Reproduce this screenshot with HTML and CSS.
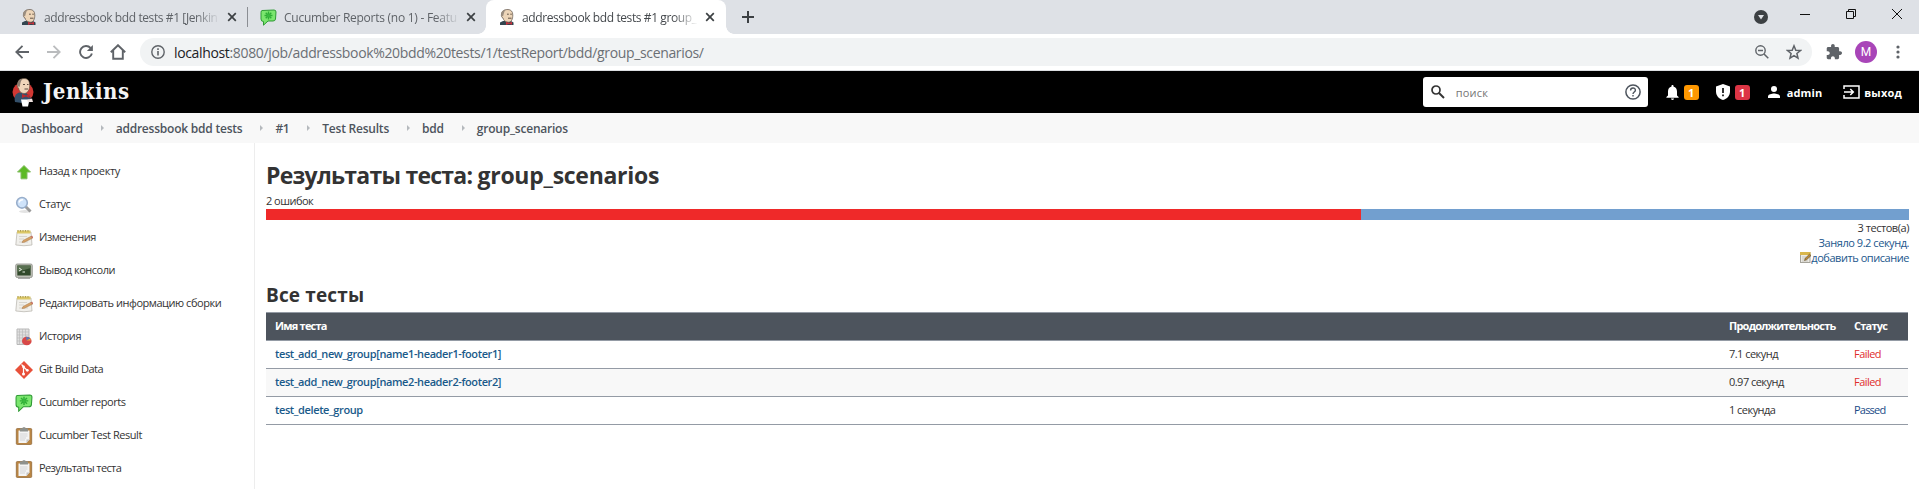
FILE: index.html
```html
<!DOCTYPE html>
<html lang="ru">
<head>
<meta charset="utf-8">
<title>Результаты теста</title>
<link rel="stylesheet" href="styles.css">
</head>
<body>
<svg class="defs" width="0" height="0">
<defs>
<symbol id="butler" viewBox="0 0 16 16"><path d="M1 16V13.500L4 12H12L14.500 13.500V16Z" fill="#33454f"/><path d="M2.500 5C3 1.500 6 .5 9 .5C12 .6 13.800 2.500 13.800 6C13.800 10 12.500 13.200 9.500 13.200C6 13.200 4.500 11 4 9C2.300 8.500 2.200 6.500 2.500 5Z" fill="#edd5b8" stroke="#5d5248" stroke-width=".7"/><path d="M2.500 6.500C1.500 3 4 .6 7 .5C4.800 2.500 5 4.500 4 7.500Z" fill="#9b8e80"/><path d="M8 5.200h1.800M11.300 5.200h1.500M9 9.200h3.500" stroke="#54453a" stroke-width=".9"/><path d="M7 12.800L10 14L13 12.800V15.800L10 14.800L7 16Z" fill="#c4323c"/></symbol>
<symbol id="cuke" viewBox="0 0 17 17"><path d="M2 1.500L14 1Q16 1 16 3L15.500 10Q15.300 12 13 12H8L3.500 16.200V12.500Q1 12.500 1 10V3.500Q1 1.600 2 1.500Z" fill="#7be66e" stroke="#2f9a35" stroke-width="1"/><path d="M8.500 2.500V10.500M4.500 6.500H12.500M5.700 3.700L11.300 9.300M11.300 3.700L5.700 9.300" stroke="#2fae36" stroke-width="1.400"/><circle cx="8.500" cy="6.500" r="1.600" fill="#3abb3f"/></symbol>
<symbol id="close" viewBox="0 0 10 10"><path d="M1.200 1.200L8.800 8.800M8.800 1.200L1.200 8.800" stroke="#3c4043" stroke-width="1.700"/></symbol>
<symbol id="note" viewBox="0 0 18 18"><path d="M2 3H16L17 16Q9 17.500 .8 16Z" fill="#f1f0ec" stroke="#b5b2aa" stroke-width=".7"/><path d="M2.200 1.500H15.500V4.500H2Z" fill="#dcc869"/><path d="M3 1v1.500M5.500 1v1.500M8 1v1.500M10.500 1v1.500M13 1v1.500" stroke="#8b7c35" stroke-width=".7"/><path d="M4 7.500h8M4 10h5M4 13h9" stroke="#ccc9c2" stroke-width=".7"/><path d="M8 11.500L16.500 7L17.800 9L9.500 13.200L7 13.500Z" fill="#d6a066" stroke="#a5784a" stroke-width=".5"/><path d="M15.800 7.300L17.300 6.800L18 8.800L17 9.300Z" fill="#c56d67"/></symbol>
<symbol id="clip" viewBox="0 0 18 18"><rect x="1.300" y="1.500" width="15.400" height="16" rx="1" fill="#b98543" stroke="#8d6231" stroke-width=".7"/><path d="M3.500 3.500H14.500V12.500L11.500 16H3.500Z" fill="#f4f4f4"/><path d="M14.500 12.500H11.500V16Z" fill="#c4c4c4"/><path d="M5 7h7.500M5 9h7.500M5 11h6M5 13h5" stroke="#c4c6c8" stroke-width=".7"/><path d="M5 1.500H7L8 .3H10L11 1.500H13V4.500H5Z" fill="#8e918d"/></symbol>
</defs>
</svg>
<div class="tabs">
  <div class="tab"><svg class="fav" width="16" height="16"><use href="#butler"/></svg><span class="tt">addressbook bdd tests #1 [Jenkin</span><svg width="10" height="10"><use href="#close"/></svg></div>
  <i class="sep"></i>
  <div class="tab second"><svg class="fav" width="17" height="17"><use href="#cuke"/></svg><span class="tt">Cucumber Reports (no 1) - Featu</span><svg width="10" height="10"><use href="#close"/></svg></div>
  <div class="tab active"><svg class="fav" width="16" height="16"><use href="#butler"/></svg><span class="tt">addressbook bdd tests #1 group_</span><svg width="10" height="10"><use href="#close"/></svg></div>
  <svg class="plus" width="12" height="12" viewBox="0 0 12 12"><path d="M6 0V12M0 6H12" stroke="#3c4043" stroke-width="2"/></svg>
  <div class="win">
    <svg class="chev" width="14" height="14" viewBox="0 0 14 14"><circle cx="7" cy="7" r="7" fill="#3c4043"/><path d="M4 5H10L7 9.500Z" fill="#dee1e6"/></svg>
    <svg width="10" height="10" viewBox="0 0 10 10"><path d="M0 5.500H10" stroke="#111"/></svg>
    <svg width="10" height="10" viewBox="0 0 10 10"><path d="M.5 2.500H7.500V9.500H.5ZM2.500 2.500V.5H9.500V7.500H7.500" fill="none" stroke="#111"/></svg>
    <svg width="10" height="10" viewBox="0 0 10 10"><path d="M0 0L10 10M10 0L0 10" stroke="#111"/></svg>
  </div>
</div>
<div class="toolbar">
  <svg width="14" height="14" viewBox="0 0 14 14"><path d="M14 7H1.500M7.500 .8L1.300 7L7.500 13.200" fill="none" stroke="#5f6368" stroke-width="1.800"/></svg>
  <svg width="14" height="14" viewBox="0 0 14 14"><path d="M0 7H12.500M6.500 .8L12.700 7L6.500 13.200" fill="none" stroke="#babcbe" stroke-width="1.800"/></svg>
  <svg width="14" height="14" viewBox="0 0 14 14"><path d="M11.600 3A6 6 0 1 0 12.900 8.500" fill="none" stroke="#5f6368" stroke-width="1.900"/><path d="M13.900 0V6H7.900Z" fill="#5f6368"/></svg>
  <svg class="home" width="16" height="16" viewBox="0 0 16 16"><path d="M.8 8.200L8 1.200L15.200 8.200M3.200 6.500V14.800H12.800V6.500" fill="none" stroke="#5f6368" stroke-width="1.900"/></svg>
  <div class="omni">
    <svg width="14" height="14" viewBox="0 0 14 14"><circle cx="7" cy="7" r="6.200" fill="none" stroke="#5f6368" stroke-width="1.400"/><path d="M7 6V10.500M7 3.300V4.900" stroke="#5f6368" stroke-width="1.600"/></svg>
    <span class="url"><b>localhost</b>:8080/job/addressbook%20bdd%20tests/1/testReport/bdd/group_scenarios/</span>
    <svg class="zoomout" width="14" height="14" viewBox="0 0 14 14"><circle cx="5.500" cy="5.500" r="4.700" fill="none" stroke="#5f6368" stroke-width="1.400"/><path d="M3 5.500H8M9 9L13.300 13.300" stroke="#5f6368" stroke-width="1.500"/></svg>
    <svg width="16" height="16" viewBox="0 0 16 16"><path d="M8 1.800L9.800 6.200L14.500 6.500L10.900 9.500L12 14.200L8 11.700L4 14.200L5.100 9.500L1.500 6.500L6.200 6.200Z" fill="none" stroke="#5f6368" stroke-width="1.500"/></svg>
  </div>
  <svg class="puzzle" width="16" height="16" viewBox="1 1 22 22"><path d="M20.500 11H19V7c0-1.100-.9-2-2-2h-4V3.500C13 2.120 11.880 1 10.500 1S8 2.120 8 3.500V5H4c-1.100 0-1.990.9-1.990 2v3.800H3.500c1.490 0 2.700 1.210 2.700 2.700s-1.210 2.700-2.700 2.700H2V20c0 1.100.9 2 2 2h3.800v-1.500c0-1.490 1.210-2.700 2.700-2.700s2.700 1.210 2.700 2.700V22H17c1.100 0 2-.9 2-2v-4h1.500c1.380 0 2.500-1.120 2.500-2.500S21.880 11 20.500 11z" fill="#5f6368"/></svg>
  <span class="avatar">M</span>
  <svg class="dots" width="4" height="14" viewBox="0 0 4 14"><g fill="#5f6368"><circle cx="2" cy="2" r="1.600"/><circle cx="2" cy="7" r="1.600"/><circle cx="2" cy="12" r="1.600"/></g></svg>
</div>
<header class="header">
  <svg width="22" height="29" viewBox="0 0 22 29"><ellipse cx="11" cy="14" rx="10.500" ry="9.500" fill="#d23833"/><path d="M3 24C2 19 3 16 7 14.500L14 15L18.500 19V24L10 25Z" fill="#34506a"/><path d="M6 4C7 1 10 .4 13 .6C17 1 18 5 17.600 9C17 13 15 15.500 12 15.500C9 15.500 7 13 6.500 10C5 9.500 5 6 6 4Z" fill="#efd6ba" stroke="#5c4a3c" stroke-width=".6"/><path d="M5.500 8C5 4 7.500 1 11 .8C8 3 9 5 7.500 9Z" fill="#8b7d70"/><path d="M11 6.500h2M15 6.500h1.500M12.500 11h3.500" stroke="#4b3b30" stroke-width=".9"/><path d="M10 16L14 17.500L17.500 16V20L14 18.500L10 20Z" fill="#b92b2e"/><path d="M9 21.500H17.500L16 28.500H10.500Z" fill="#fff"/><path d="M15 22L20 20.500L21 24H16Z" fill="#efe3e0"/></svg>
  <span class="brand">Jenkins</span>
  <div class="search">
    <svg width="14" height="14" viewBox="0 0 14 14"><circle cx="5" cy="5" r="4" fill="none" stroke="#333" stroke-width="1.700"/><path d="M8 8L13 13" stroke="#333" stroke-width="2"/></svg>
    <span class="ph">поиск</span>
    <svg class="help" width="16" height="16" viewBox="0 0 16 16"><circle cx="8" cy="8" r="7.100" fill="none" stroke="#4d545d" stroke-width="1.500"/><path d="M5.600 6.400C5.600 3.200 10.400 3.200 10.400 6.200C10.400 8 8 8 8 10M8 11V12.500" fill="none" stroke="#4d545d" stroke-width="1.400"/></svg>
  </div>
  <svg class="bell" width="13" height="15" viewBox="0 0 13 15"><path d="M6.500 15C7.500 15 8 14.300 8 13.600H5C5 14.300 5.500 15 6.500 15ZM11 10.500V6.500C11 4 9.700 2.300 7.600 1.800V1.200C7.600-.3 5.400-.3 5.400 1.200V1.800C3.300 2.300 2 4 2 6.500V10.500L.4 12V12.800H12.600V12Z" fill="#fff"/></svg>
  <span class="badge orange">1</span>
  <svg class="shield" width="14" height="16" viewBox="0 0 14 16"><path d="M7 0L14 2.500V7.500C14 11.500 11 15 7 16C3 15 0 11.500 0 7.500V2.500Z" fill="#fff"/><path d="M7 4V9M7 10.500V12.300" stroke="#000" stroke-width="1.600"/></svg>
  <span class="badge red">1</span>
  <svg class="person" width="12" height="12" viewBox="0 0 12 12"><circle cx="6" cy="3" r="3" fill="#fff"/><path d="M0 12V10.300C0 8.300 4 7.400 6 7.400S12 8.300 12 10.300V12Z" fill="#fff"/></svg>
  <span class="user">admin</span>
  <svg class="logout" width="17" height="14" viewBox="0 0 17 14"><path d="M1 4V1H16V13H1V10M1 7H10M7.300 4L10.300 7L7.300 10" fill="none" stroke="#fff" stroke-width="1.500"/></svg>
  <span class="user exit">выход</span>
</header>
<nav class="crumbs">
  <span>Dashboard</span><i></i><span>addressbook bdd tests</span><i></i><span class="num">#1</span><i></i><span>Test Results</span><i></i><span>bdd</span><i></i><span>group_scenarios</span>
</nav>
<div class="page">
  <aside class="side">
    <div><svg width="18" height="18" viewBox="0 0 18 18"><path d="M9 2.500L15.500 9H12V15.800H6V9H2.500Z" fill="#5cba24" stroke="#82bd60" stroke-width="1"/></svg><span class="back">Назад к проекту</span></div>
    <div><svg width="18" height="18" viewBox="0 0 18 18"><ellipse cx="10" cy="15.500" rx="6" ry="1.500" fill="#e3e3e3"/><path d="M10.500 10.500L15.500 15.500" stroke="#9b9b9b" stroke-width="3"/><circle cx="7" cy="6.800" r="5.300" fill="#cfe3fa" stroke="#98aecb" stroke-width="1.600"/><path d="M4 6.500Q5 3.500 8 3.800" fill="none" stroke="#fff" stroke-width="1.300"/></svg><span>Статус</span></div>
    <div><svg width="18" height="18"><use href="#note"/></svg><span>Изменения</span></div>
    <div><svg width="18" height="18" viewBox="0 0 18 18"><rect x=".7" y="2" width="16.600" height="13.500" rx="1.500" fill="#bfc0b8" stroke="#8d8f88" stroke-width=".8"/><rect x="2.300" y="3.500" width="13.400" height="10" fill="#324a2c"/><path d="M2.300 3.500H15.700V6L2.300 10Z" fill="#587050"/><path d="M4 6L6.500 7.500L4 9M7.500 10H10" fill="none" stroke="#e6eee2"/><path d="M3 16.500H15" stroke="#aaa"/></svg><span>Вывод консоли</span></div>
    <div><svg width="18" height="18"><use href="#note"/></svg><span>Редактировать информацию сборки</span></div>
    <div><svg width="18" height="18" viewBox="0 0 18 18"><path d="M2 1H14V16.500H2Z" fill="#e0e0e0" stroke="#b9b9b9"/><path d="M4.500 1V16M7.500 1V16M10.500 1V16M2 4H14M2 7H14M2 10H14M2 13H14" stroke="#bcbcbc" stroke-width=".7"/><ellipse cx="11.800" cy="13" rx="4.800" ry="4.300" fill="#d84848"/><path d="M11.500 12.500L11 8.700A4.800 4.300 0 0 1 15.300 10.500Z" fill="#5a79b4"/><path d="M11.500 12.500L15.500 10.500V12.500Z" fill="#e8b13c"/></svg><span>История</span></div>
    <div><svg width="18" height="18" viewBox="0 0 18 18"><path d="M9 0L18 9L9 18L0 9Z" fill="#e8503a"/><path d="M6.500 3.500L8.500 5.500V13M8.500 6L12.500 9.500" fill="none" stroke="#fff" stroke-width="1.200"/><g fill="#fff"><circle cx="8.500" cy="5.800" r="1.400"/><circle cx="8.500" cy="13" r="1.500"/><circle cx="12.300" cy="9.300" r="1.400"/></g></svg><span>Git Build Data</span></div>
    <div><svg width="18" height="18"><use href="#cuke"/></svg><span>Cucumber reports</span></div>
    <div><svg width="18" height="18"><use href="#clip"/></svg><span>Cucumber Test Result</span></div>
    <div><svg width="18" height="18"><use href="#clip"/></svg><span class="results">Результаты теста</span></div>
  </aside>
  <main class="main">
    <h1>Результаты теста: <span class="name">group_scenarios</span></h1>
    <div class="fails">2 ошибок</div>
    <div class="bar"><i style="width:66.650%"></i></div>
    <div class="info">3 тестов(a)</div>
    <div class="info link">Заняло 9.2 секунд.</div>
    <div class="info link"><svg width="11" height="11" viewBox="0 0 11 11"><rect x=".5" y=".5" width="9.500" height="10" fill="#eceae4" stroke="#a5a39b"/><path d="M0 0H10.500V3H0Z" fill="#d9b64c"/><path d="M2 5h4M2 7h2.500M2 9h6" stroke="#b9b7b0" stroke-width=".7"/><path d="M4.500 8.500L5.200 6.300L9.500 2.200L11 3.600L6.700 7.700Z" fill="#b98a3c" stroke="#5f4a2a" stroke-width=".6"/></svg><span>добавить описание</span></div>
    <h2>Все тесты</h2>
    <div class="table">
      <div class="row head"><span>Имя теста</span><span>Продолжительность</span><span>Статус</span></div>
      <div class="row"><b>test_add_new_group[name1-header1-footer1]</b><span>7.1 секунд</span><span class="bad">Failed</span></div>
      <div class="row odd"><b>test_add_new_group[name2-header2-footer2]</b><span>0.97 секунд</span><span class="bad">Failed</span></div>
      <div class="row"><b>test_delete_group</b><span>1 секунда</span><span class="ok">Passed</span></div>
    </div>
  </main>
</div>
</body>
</html>
```

FILE: styles.css
```css
*{box-sizing:border-box}
body{margin:0;width:1919px;height:489px;overflow:hidden;background:#fff;color:#333;font:11px/15px "Open Sans","Noto Sans",sans-serif}
svg{flex:none;display:block}
.defs{position:absolute}
span,b{white-space:nowrap}
.tabs{height:34px;background:#dee1e6;display:flex;align-items:center}
.tab{display:flex;align-items:center;width:247px;padding-left:21px;height:34px;font-size:12px;color:#5f6368;letter-spacing:-.4px}
.tt{width:176px;margin:0 7px;-webkit-mask-image:linear-gradient(90deg,#000 86%,transparent);mask-image:linear-gradient(90deg,#000 86%,transparent)}
.sep{width:1px;height:20px;background:#8b8e93}
.second{width:238px;padding-left:12px;letter-spacing:-.26px}
.second .tt{margin-right:6px}
.active{position:relative;width:240px;padding-left:13px;background:#fff;border-radius:8px 8px 0 0;color:#45494d}
.active::before,.active::after{content:"";position:absolute;bottom:0;width:8px;height:8px}
.active::before{left:-8px;background:radial-gradient(circle at 0 0,transparent 7.5px,#fff 8px)}
.active::after{right:-8px;background:radial-gradient(circle at 100% 0,transparent 7.5px,#fff 8px)}
.plus{margin-left:16px}
.win{display:flex;align-items:center;margin-left:auto;gap:36px;padding-right:17px;height:28px;align-self:flex-start}
.chev{margin:6px -4px 0 0}
.toolbar{height:37px;border-bottom:1px solid #dcdee1;display:flex;align-items:center;padding-left:15px;gap:18px}
.home{margin:0 1px 0 -1px}
.omni{width:1672px;height:28px;border-radius:14px;background:#f1f3f4;display:flex;align-items:center;margin-left:-5px;padding:0 10px 0 11px;font-size:14px;color:#6b6f74}
.url{margin-left:9px;letter-spacing:-.35px}
.url b{font-weight:400;color:#202124}
.zoomout{margin:0 17px 0 auto}
.puzzle{margin-left:-4px}
.avatar{width:22px;height:22px;border-radius:50%;background:#a845b8;color:#fff;font:12px/22px Roboto,sans-serif;text-align:center;margin-left:-5px}
.dots{margin-left:1px}
.header{height:42px;background:#000;display:flex;align-items:center;padding:0 17px 0 12px;color:#fff}
.brand{font:bold 22px/26px "DejaVu Serif Condensed","DejaVu Serif",serif;margin:0 0 2px 9px;letter-spacing:.5px;color:#f4f4f4}
.search{width:225px;height:30px;background:#fff;border-radius:3px;display:flex;align-items:center;padding:0 7px 0 8px;margin-left:auto;color:#757575;letter-spacing:.2px}
.ph{margin-left:11px}
.help{margin-left:auto}
.bell{margin-left:18px}
.badge{width:15px;height:15px;border-radius:3px;font-weight:700;text-align:center;margin-left:5px}
.orange{background:#ff9800}
.red{background:#dc3545}
.shield{margin-left:17px}
.person{margin-left:18px}
.user{font-weight:700;margin-left:7px;letter-spacing:.1px}
.exit{margin-left:4px;letter-spacing:.2px}
.logout{margin-left:21px}
.crumbs{height:30px;background:#f8f8f8;display:flex;align-items:center;padding-left:21px;font-weight:600;font-size:12px;color:#4d545d;letter-spacing:-.22px}
.crumbs i{border:3px solid transparent;border-left:3px solid #b5b9bd;border-right:0;margin:0 12px 0 18px}
.num{letter-spacing:-.4px}
.page{display:flex;height:346px}
.side{width:255px;border-right:1px solid #ededed;padding:12px 0 0 15px;letter-spacing:-.46px}
.side div{display:flex;align-items:center;height:33px;gap:6px}
.side span{margin-bottom:2px}
.side .back{letter-spacing:-.34px}
.side .results{letter-spacing:-.62px}
.main{flex:1;padding:0 10px 0 11px;letter-spacing:-.53px}
h1{font-size:23px;line-height:30px;margin:17px 0 0;font-weight:700;letter-spacing:-.75px}
.name{letter-spacing:-.28px}
.fails{height:19px;padding-top:3px}
.bar{height:11px;background:#729fcf;display:flex}
.bar i{background:#ef2929}
.info{display:flex;justify-content:flex-end;align-items:center;height:15px;letter-spacing:-.45px}
.link{color:#22578c}
h2{font-size:19px;line-height:26px;margin:17px 0 4px;letter-spacing:.15px}
.table{margin-right:1px;border-top:1px solid #949ba5}
.row{display:grid;grid-template-columns:1454px 125px 1fr;padding:0 0 2px 9px;height:28px;align-items:center;border-bottom:1px solid #949ba5}
.row b{font-weight:600;color:#1a5a8a;letter-spacing:-.39px}
.head{background:#4d545d;color:#fff;font-weight:700;letter-spacing:-.78px}
.odd{background:#f8f8f8}
.bad{color:#e02c2c}
.ok{color:#204a87;letter-spacing:-.8px}
```
